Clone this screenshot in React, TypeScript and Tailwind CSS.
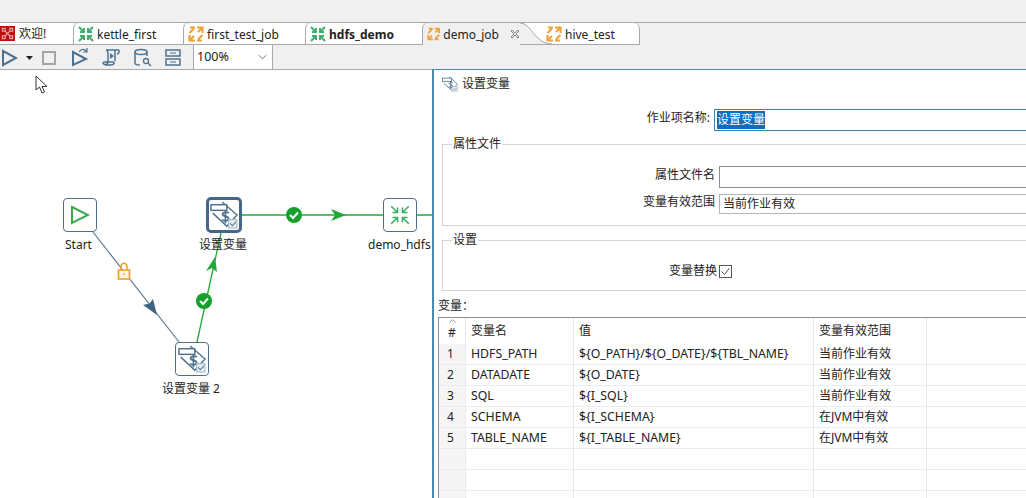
import React from 'react';

const FONT = "font-['Noto_Sans','Noto_Sans_CJK_SC',sans-serif]";

type IconProps = { className?: string; sw?: number };

const TransIcon = ({ className = 'w-4 h-4', sw = 2 }: IconProps) => (
    <svg viewBox="0 0 16 16" className={className} fill="none" stroke="#3fae6a" strokeWidth={sw}>
        <path d="M1 1 L6 6 M6 2 V6 H2" />
        <path d="M15 1 L10 6 M10 2 V6 H14" />
        <path d="M1 15 L6 10 M6 14 V10 H2" />
        <path d="M15 15 L10 10 M10 14 V10 H14" />
    </svg>
);

const JobIcon = ({ className = 'w-4 h-4' }: IconProps) => (
    <svg viewBox="0 0 16 16" className={className} fill="none" stroke="#eca33c" strokeWidth="2.200">
        <path d="M1.500 7 L6 2.500 M2 1.500 H7" />
        <path d="M9 1.500 H14.500 V7 M14 2 L10 6" />
        <path d="M14.500 9 L10 13.500 M14 14.500 H9" />
        <path d="M7 14.500 H1.500 V9 M2 14 L6 10" />
    </svg>
);

const WelcomeIcon = () => (
    <svg viewBox="0 0 16 16" className="w-[15px] h-[15px]">
        <rect width="16" height="16" fill="#c00d0d" />
        <g fill="none" stroke="#f0b8b8" strokeWidth="1.100">
            <rect x="2.500" y="2.500" width="3" height="3" />
            <rect x="10.500" y="2.500" width="3" height="3" />
            <rect x="2.500" y="10.500" width="3" height="3" />
            <rect x="10.500" y="10.500" width="3" height="3" />
            <path d="M5.500 5.500 L10.500 10.500 M10.500 5.500 L5.500 10.500" />
        </g>
    </svg>
);

const SetVarIcon = ({ className = 'w-[30px] h-[30px]' }: IconProps) => (
    <svg viewBox="0 0 30 30" className={className} fill="none">
        <path d="M13 1 L29 15 L18 27 L3 13" stroke="#4d6f8c" strokeWidth="1.500" fill="#fff" />
        <rect x="1" y="4" width="17" height="6" fill="#fff" stroke="#4d6f8c" strokeWidth="1.500" />
        <path d="M20 13 C18 11 13 12 13.500 14.500 C14 17 20 16 20 19 C20 21.500 15 22 13 20 M16.500 10 V24" stroke="#4d6f8c" strokeWidth="1.800" />
        <rect x="20" y="20" width="9" height="9" fill="#e6edf3" stroke="#9fb4c6" />
        <path d="M21.500 24 L24 26.500 L28 22" stroke="#5f7f99" strokeWidth="1.200" />
    </svg>
);

const tabs = [
    { name: 'kettle_first', w: 'w-[110px]', icon: <TransIcon /> },
    { name: 'first_test_job', w: 'w-[122px]', icon: <JobIcon /> },
    { name: 'hdfs_demo', w: 'w-[117px]', icon: <TransIcon />, bold: true },
];

const TabBar = () => (
    <div className="flex h-[23px] border-t border-[#a9a9a9] mt-[22px] bg-[#f0f0f0]">
        <div className="w-[73px] flex items-center gap-[4px] bg-white border-b border-[#a9a9a9] text-[12px] text-[#222]">
            <WelcomeIcon />
            <span className="mt-[1px]">欢迎!</span>
        </div>
        {tabs.map((t) => (
            <div
                key={t.name}
                className={`${t.w} flex items-center gap-[3px] pl-[4px] bg-white border-l border-b border-[#a9a9a9] rounded-tl-[6px] text-[12px] text-[#222] ${t.bold ? 'font-bold' : ''}`}
            >
                {t.icon}
                <span className="mt-[2px]">{t.name}</span>
            </div>
        ))}
        <div className="w-[98px] flex items-center gap-[3px] pl-[4px] border-l border-[#a9a9a9] rounded-tl-[6px] text-[12px] text-[#222]">
            <JobIcon />
            <span className="mt-[2px]">demo_job</span>
            <svg viewBox="0 0 10 10" className="w-[10px] h-[10px] ml-[8px] shrink-0" fill="none" stroke="#888" strokeWidth="1">
                <path d="M1 2 L2 1 L5 4 L8 1 L9 2 L6 5 L9 8 L8 9 L5 6 L2 9 L1 8 L4 5 Z" />
            </svg>
        </div>
        <div className="relative w-[120px] flex items-center gap-[3px] pl-[26px] bg-white border-b border-r border-[#a9a9a9] rounded-tr-[6px] text-[12px] text-[#222]">
            <svg viewBox="0 0 34 22" className="absolute left-0 top-0 w-[34px] h-[22px]" fill="none">
                <path d="M0 0 C12 0 14 21 32 21 H0 Z" fill="#f0f0f0" />
                <path d="M0 0 C12 0 14 21 32 21" stroke="#a9a9a9" />
            </svg>
            <JobIcon className="w-4 h-4 relative" />
            <span className="mt-[2px] relative">hive_test</span>
        </div>
    </div>
);

const Toolbar = () => (
    <div className="flex items-center h-[25px] bg-[#f0f0f0] border-b border-[#a9a9a9]">
        <svg viewBox="0 0 193 24" className="w-[193px] h-[24px]" fill="none" stroke="#4d7391" strokeWidth="2">
            <path d="M3 6 L16 13 L3 20 Z" />
            <path d="M26 11 H33 L29.500 15 Z" fill="#222" stroke="none" />
            <rect x="43" y="7" width="12" height="12" stroke="#a5a5a5" strokeWidth="2" />
            <path d="M73 7 L86 14 L73 20 Z" />
            <path d="M79 7 C82 3 85 4 87 7 M87 3 V7 H83" strokeWidth="1.200" />
            <path d="M106 5 H118 C120 5 119 9 117 9 M106 5 C108 5 108 8 108 10 V17 C108 20 103 20 103 18 C103 17 104 17 105 17 H113 C115 17 115 20 110 20 H105 M115 5 V16" strokeWidth="1.500" />
            <path d="M110 8 L114 11 L110 14 Z" fill="#4d7391" stroke="none" />
            <ellipse cx="141" cy="7" rx="6" ry="2.500" strokeWidth="1.500" />
            <path d="M135 7 V18 C135 20 138 20 140 20 M147 7 V11" strokeWidth="1.500" />
            <circle cx="146" cy="16" r="2.500" strokeWidth="1.300" />
            <path d="M148 18 L151 21" strokeWidth="1.300" />
            <rect x="166" y="5" width="14" height="6" strokeWidth="1.500" />
            <rect x="166" y="14" width="14" height="6" strokeWidth="1.500" />
            <path d="M170 8 H176 M170 17 H176" strokeWidth="1" />
        </svg>
        <div className="w-[80px] h-full flex items-center justify-between pl-[3px] pr-[4px] bg-white border-x border-[#a9a9a9] text-[12.500px] text-[#222]">
            <span>100%</span>
            <svg viewBox="0 0 10 6" className="w-[9px] h-[6px] mr-[1px]" fill="none" stroke="#666">
                <path d="M1 1 L5 5 L9 1" />
            </svg>
        </div>
    </div>
);

const CheckBadge = ({ x, y }: { x: number; y: number }) => (
    <g transform={`translate(${x} ${y})`}>
        <circle r="8" fill="#16a02c" />
        <path d="M-4 0 L-1 3 L4 -2.500" fill="none" stroke="#fff" strokeWidth="2" />
    </g>
);

const Canvas = () => (
    <div className="relative w-[432px] shrink-0 bg-white overflow-hidden text-[12px] text-[#222]">
        <svg viewBox="0 1 432 429" className="w-[432px] h-[429px]" fill="none">
            <path d="M93 163 L179 273" stroke="#5d7a92" strokeWidth="1.200" />
            <path d="M143 236 L149.500 234.500 L153 230 L157 246 Z" fill="#3f6381" />
            <path d="M197 273 L221 164" stroke="#22a838" strokeWidth="1.300" />
            <path d="M215 188 L206 202 L212 199 L217 203 Z" fill="#22a838" />
            <path d="M241 146 H432" stroke="#22a838" strokeWidth="1.300" />
            <path d="M331 140 L346 146 L331 152 L335 146 Z" fill="#22a838" />
            <CheckBadge x={204} y={232} />
            <CheckBadge x={294} y={146} />
            <g stroke="#eca33c" strokeWidth="1.700">
                <rect x="118.500" y="201" width="11" height="9" fill="#fdf3e2" />
                <path d="M121 201 V198 C121 193 127 193 127 198 V201" />
            </g>
            <rect x="123.500" y="204.500" width="1.500" height="1.500" fill="#eca33c" />
        </svg>

        {/* nodes */}
        <div className="absolute left-[63px] top-[128px] w-[34px] h-[34px] bg-white border border-[#4d6f8c] rounded-[4px] flex items-center justify-center">
            <svg viewBox="0 0 20 20" className="w-[20px] h-[20px]" fill="none" stroke="#3aa84a" strokeWidth="2">
                <path d="M2 2 L18 10 L2 18 Z" />
            </svg>
        </div>
        <span className="absolute left-[65px] top-[166px]">Start</span>

        <div className="absolute left-[206px] top-[127px] w-[36px] h-[36px] bg-white border-[3px] border-[#44678a] rounded-[5px] flex items-center justify-center">
            <SetVarIcon className="w-[28px] h-[28px]" />
        </div>
        <span className="absolute left-[199px] top-[166px]">设置变量</span>

        <div className="absolute left-[383px] top-[128px] w-[34px] h-[34px] bg-white border border-[#4d6f8c] rounded-[4px] flex items-center justify-center">
            <TransIcon className="w-[20px] h-[20px]" sw={1.300} />
        </div>
        <span className="absolute left-[368px] top-[166px]">demo_hdfs</span>

        <div className="absolute left-[175px] top-[272px] w-[34px] h-[34px] bg-white border border-[#4d6f8c] rounded-[4px] flex items-center justify-center">
            <SetVarIcon className="w-[28px] h-[28px]" />
        </div>
        <span className="absolute left-[162px] top-[310px]">设置变量 2</span>

        {/* mouse pointer */}
        <svg viewBox="0 0 14 20" className="absolute left-[35px] top-[5px] w-[14px] h-[20px]" fill="#fff" stroke="#333" strokeWidth="1">
            <path d="M1 1 V15 L4.500 12 L7 18 L9.500 17 L7 11.500 L12 11.500 Z" />
        </svg>
    </div>
);

const rows = [
    ['1', 'HDFS_PATH', '${O_PATH}/${O_DATE}/${TBL_NAME}', '当前作业有效'],
    ['2', 'DATADATE', '${O_DATE}', '当前作业有效'],
    ['3', 'SQL', '${I_SQL}', '当前作业有效'],
    ['4', 'SCHEMA', '${I_SCHEMA}', '在JVM中有效'],
    ['5', 'TABLE_NAME', '${I_TABLE_NAME}', '在JVM中有效'],
    ['', '', '', ''],
    ['', '', '', ''],
    ['', '', '', ''],
];

const VarTable = () => (
    <div className="ml-[4px] border-t border-l border-[#8f8f8f] text-[12px] text-[#222]">
        <div className="flex h-[26px] items-center">
            <div className="relative w-[27px] h-full flex items-center justify-center border-r border-[#e6e9ee]">
                <svg viewBox="0 0 8 4" className="absolute top-[1px] w-[7px] h-[4px]" fill="none" stroke="#888">
                    <path d="M0.500 3.500 L4 0.500 L7.500 3.500" />
                </svg>
                <span className="mt-[3px]">#</span>
            </div>
            <div className="w-[108px] h-full flex items-center pl-[5px] border-r border-[#e6e9ee]">变量名</div>
            <div className="w-[240px] h-full flex items-center pl-[5px] border-r border-[#e6e9ee]">值</div>
            <div className="w-[113px] h-full flex items-center pl-[5px] border-r border-[#e6e9ee]">变量有效范围</div>
        </div>
        {rows.map((r, i) => (
            <div key={i} className="flex h-[21px] items-center border-b border-[#e6eef5]">
                <div className="w-[27px] h-full flex items-center pl-[8px] bg-[#f5f5f5] border-r border-[#e6e9ee]">{r[0]}</div>
                <div className="w-[108px] h-full flex items-center pl-[5px] border-r border-[#e6e9ee] text-[12.300px]">{r[1]}</div>
                <div className="w-[240px] h-full flex items-center pl-[5px] border-r border-[#e6e9ee] text-[12.300px]">{r[2]}</div>
                <div className="w-[113px] h-full flex items-center pl-[5px] border-r border-[#e6e9ee]">{r[3]}</div>
            </div>
        ))}
    </div>
);

const Panel = () => (
    <div className="w-[620px] shrink-0 -mt-px bg-white border-t border-l-2 border-[#4a8aae] text-[12px] text-[#222]">
        <div className="flex items-center gap-[4px] h-[27px] pl-[8px]">
            <SetVarIcon className="w-[16px] h-[16px]" />
            <span>设置变量</span>
        </div>

        <div className="flex items-center h-[22px] mt-[12px]">
            <span className="w-[276px] text-right -mt-[4px]">作业项名称:</span>
            <div className="ml-[4px] flex-1 h-[22px] border border-[#3d7fa6] flex items-center pl-[2px]">
                <span className="bg-[#0a6fc2] text-white leading-[18px]">设置变量</span>
            </div>
        </div>

        <fieldset className="ml-[8px] mt-[4px] h-[91px] border border-[#d4d4d4]">
            <legend className="ml-[9px] px-[1px]">属性文件</legend>
            <div className="flex items-center h-[22px] mt-[13px]">
                <span className="w-[272px] text-right -mt-[4px]">属性文件名</span>
                <div className="ml-[4px] flex-1 h-[22px] border border-[#8f8f8f] bg-white" />
            </div>
            <div className="flex items-center h-[20px] mt-[6px]">
                <span className="w-[272px] text-right -mt-[4px]">变量有效范围</span>
                <div className="ml-[4px] flex-1 h-[20px] border border-[#b5b5b5] bg-white flex items-center pl-[3px]">当前作业有效</div>
            </div>
        </fieldset>

        <fieldset className="ml-[8px] mt-[5px] h-[60px] border border-[#d4d4d4]">
            <legend className="ml-[9px] px-[1px]">设置</legend>
            <div className="flex items-center h-[14px] mt-[15px]">
                <span className="w-[274px] text-right">变量替换</span>
                <svg viewBox="0 0 13 13" className="ml-[2px] w-[13px] h-[13px]" fill="none">
                    <rect x="0.500" y="0.500" width="12" height="12" stroke="#555" fill="#fff" />
                    <path d="M2.500 6.500 L5.500 9.500 L10.500 3" stroke="#555" />
                </svg>
            </div>
        </fieldset>

        <div className="ml-[4px] h-[20px] mt-[6px] leading-[18px]">变量：</div>
        <VarTable />
    </div>
);

const App = () => (
    <div className={`w-[1026px] h-[498px] overflow-hidden bg-[#f0f0f0] ${FONT}`}>
        <TabBar />
        <Toolbar />
        <div className="flex h-[429px]">
            <Canvas />
            <Panel />
        </div>
    </div>
);

export default App;
